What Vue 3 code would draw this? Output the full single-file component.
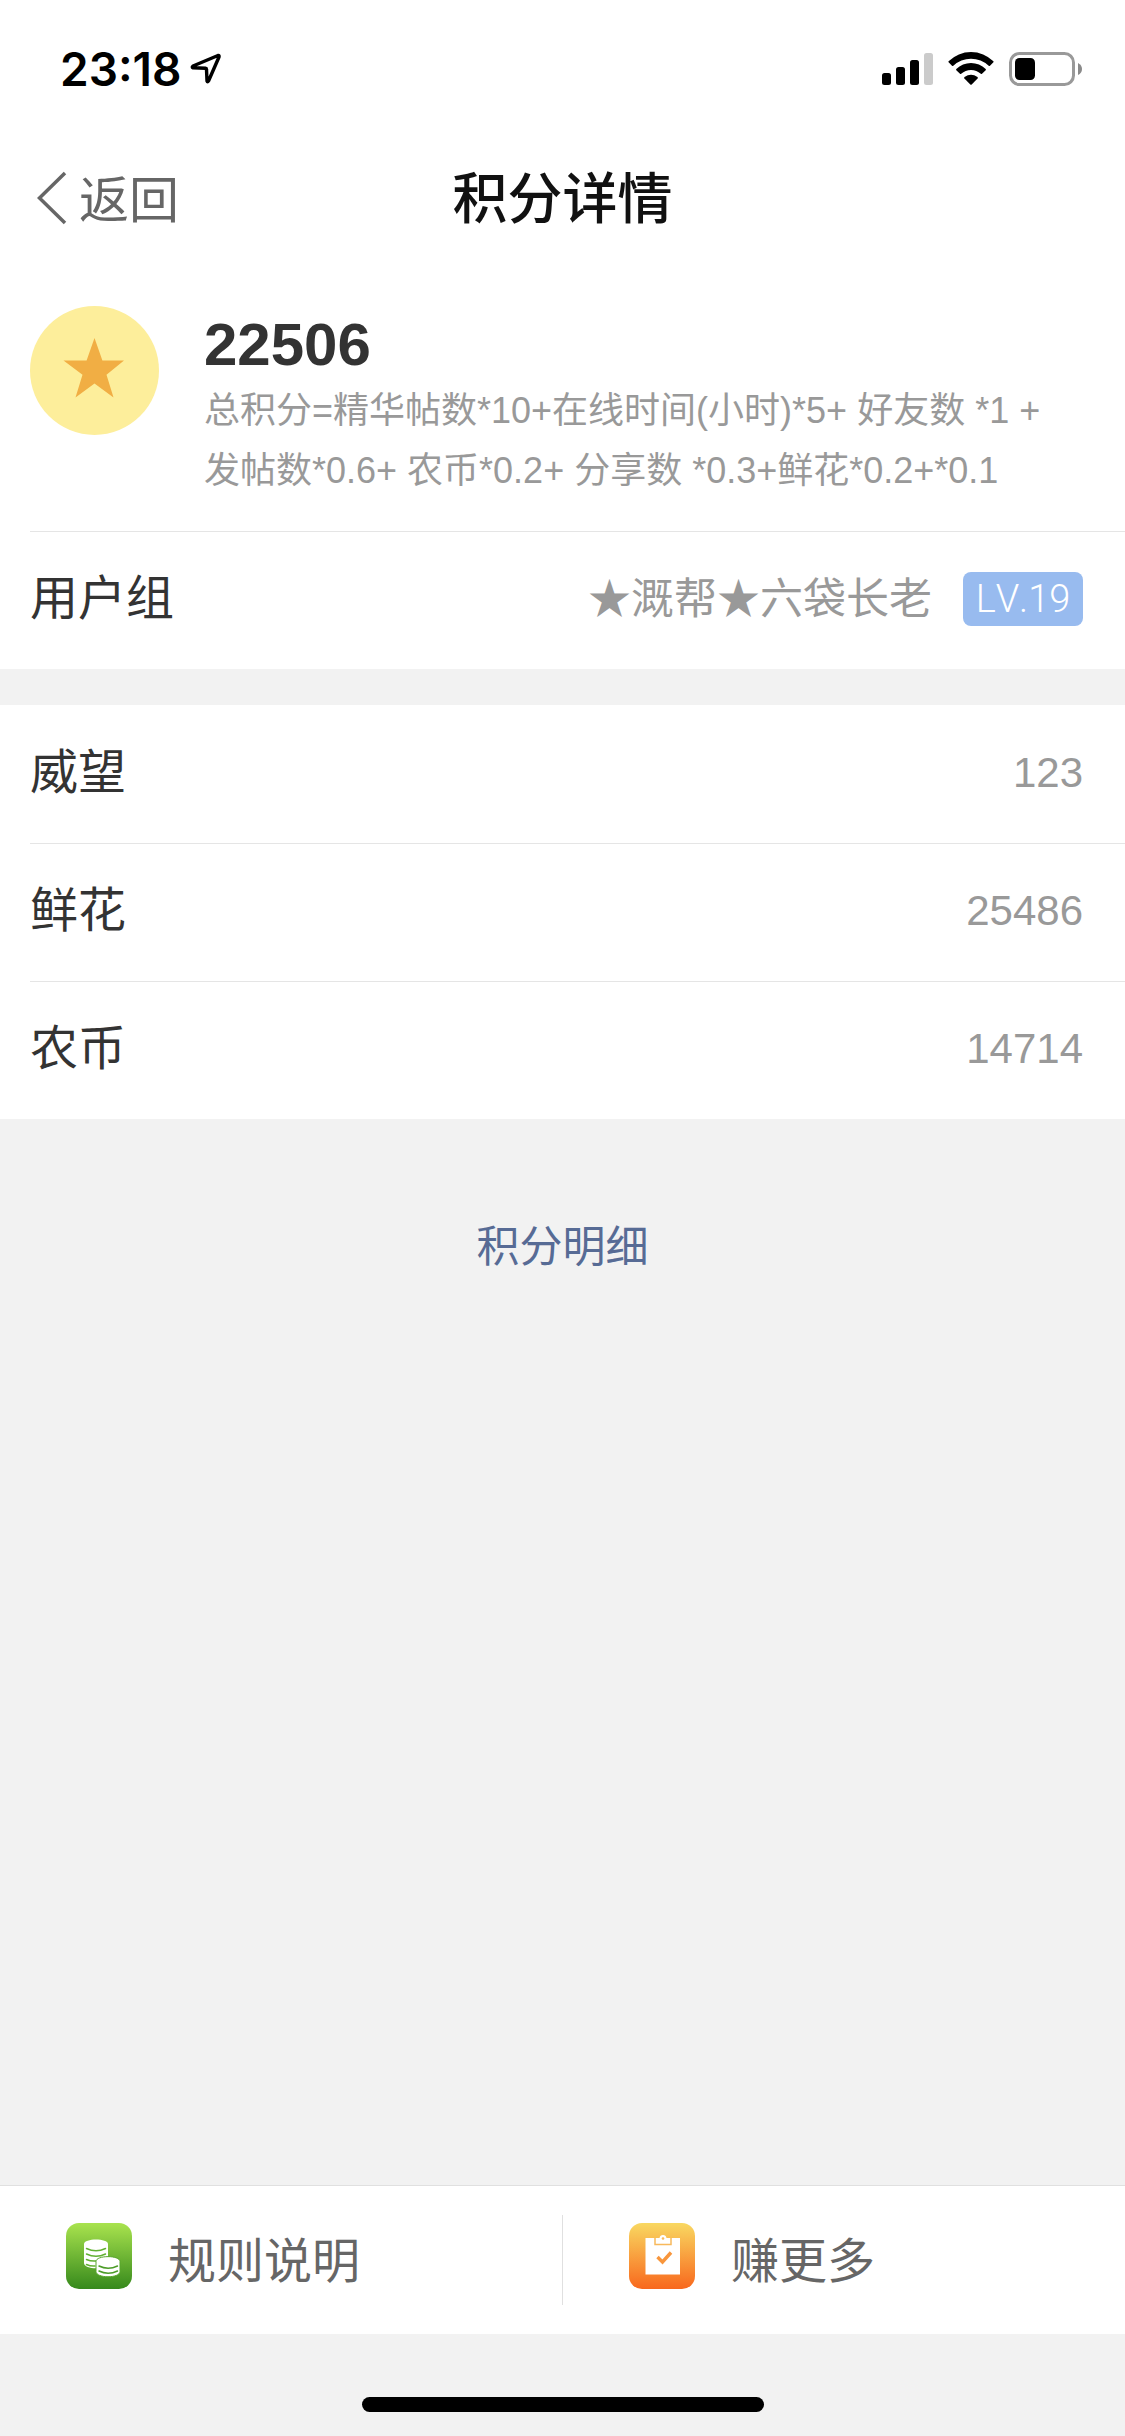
<script setup>
const assets = [
  { name: '威望', value: '123' },
  { name: '鲜花', value: '25486' },
  { name: '农币', value: '14714' },
]
</script>

<template>
  <div class="page">
    <header class="top">
      <div class="status">
        <div class="clock">
          <span class="time">23:18</span>
          <svg class="locate" width="32" height="32" viewBox="0 0 32 32" aria-hidden="true">
            <path d="M28 2.500L3 13Q1.500 14.200 3 14.800L15.500 15.300Q16.500 15.400 16.500 16.400L17 28Q17.500 29.800 18.500 28L29 4Q29.500 2.200 28 2.500Z" fill="none" stroke="#000" stroke-width="3.400" stroke-linejoin="round" />
          </svg>
        </div>
        <div class="indicators">
          <svg width="51" height="34" viewBox="0 0 51 34" aria-hidden="true">
            <rect x="0" y="21" width="9" height="12" rx="2.500" />
            <rect x="14" y="15" width="9" height="18" rx="2.500" />
            <rect x="28" y="8" width="9" height="25" rx="2.500" />
            <rect x="42" y="1" width="9" height="32" rx="2.500" fill="#cbcbcb" />
          </svg>
          <svg class="wifi" width="46" height="34" viewBox="0 0 46 34" aria-hidden="true">
            <path d="M0.600 9.200A32 32 0 0 1 45.400 9.200Q45.800 9.800 45.400 10.300L42 13.800Q41.300 14.300 40.700 13.800A25.500 25.500 0 0 0 5.300 13.800Q4.700 14.300 4 13.800L0.600 10.300Q0.200 9.800 0.600 9.200Z" />
            <path d="M8.300 17A21 21 0 0 1 37.700 17Q38.200 17.600 37.700 18.200L34 21.700Q33.400 22.200 32.800 21.700A14.500 14.500 0 0 0 13.200 21.700Q12.600 22.200 12 21.700L8.300 18.200Q7.800 17.600 8.300 17Z" />
            <path d="M16.500 25Q23 20.500 29.500 25Q30.200 25.700 29.600 26.400L23.700 32.400Q23 33 22.300 32.400L16.400 26.400Q15.800 25.700 16.500 25Z" />
          </svg>
          <svg width="74" height="34" viewBox="0 0 74 34" aria-hidden="true">
            <rect x="1.500" y="1.500" width="63" height="31" rx="9" fill="none" stroke="#999" stroke-width="3" />
            <rect x="6" y="6" width="20" height="22" rx="4.500" />
            <path d="M69 11Q73 13 73 17T69 23Z" fill="#8a8a8a" />
          </svg>
        </div>
      </div>
      <nav class="nav">
        <button class="back" type="button">
          <svg width="32" height="56" viewBox="0 0 32 56" aria-hidden="true">
            <path d="M29 3L3.500 28L29 53" fill="none" stroke="#666" stroke-width="3.500" />
          </svg>
          <span class="back-text">返回</span>
        </button>
        <h1 class="title">积分详情</h1>
      </nav>
    </header>

    <main class="content">
      <section class="card">
        <div class="summary">
          <svg class="medal" width="129" height="129" viewBox="0 0 129 129" aria-hidden="true">
            <circle cx="64.500" cy="64.500" r="64.500" fill="#fdee9b" />
            <path d="M64.500 32L72.400 54.500H94L76.500 68.700L83.500 91.500L64.500 77.500L45.500 91.500L52.500 68.700L33.500 54.500H56.600Z" fill="#f1ae44" />
          </svg>
          <div class="score">
            <strong class="total">22506</strong>
            <p class="formula">总积分=精华帖数*10+在线时间(小时)*5+ 好友数 *1 +<br>发帖数*0.6+ 农币*0.2+ 分享数 *0.3+鲜花*0.2+*0.1</p>
          </div>
        </div>
        <div class="row">
          <span class="name">用户组</span>
          <span class="group">★溉帮★六袋长老</span>
          <span class="level">LV.19</span>
        </div>
      </section>

      <section class="card">
        <div v-for="item in assets" :key="item.name" class="row">
          <span class="name">{{ item.name }}</span>
          <span class="value">{{ item.value }}</span>
        </div>
      </section>

      <a class="detail" href="#">积分明细</a>
    </main>

    <footer class="actions">
      <button class="action" type="button">
        <svg class="badge" width="66" height="66" viewBox="0 0 66 66" aria-hidden="true">
          <defs>
            <linearGradient id="green" x1="0" y1="0" x2="0" y2="1">
              <stop offset="0" stop-color="#a9e34e" />
              <stop offset="1" stop-color="#36891c" />
            </linearGradient>
          </defs>
          <rect width="66" height="66" rx="13" fill="url(#green)" />
          <path d="M18 21C18 15 42 15 42 21V40C42 47 18 47 18 40Z" fill="#fff" />
          <g fill="none" stroke="#62b032" stroke-width="1.500" stroke-linecap="round">
            <path d="M20.500 25.500Q30 30 39.500 25.500" />
            <path d="M20.500 31Q30 35.500 39.500 31" />
            <path d="M20.500 36.500Q25 38.500 30 38" />
            <path d="M20.500 41.500Q25 43.500 29 43" />
          </g>
          <path d="M30 38.500C30 32 54 32 54 38.500V48.500C54 55.500 30 55.500 30 48.500Z" fill="#fff" stroke="#58a62d" stroke-width="1" />
          <g fill="none" stroke="#4c9c28" stroke-width="1.500" stroke-linecap="round">
            <path d="M33 43Q42 47.500 51.500 43" />
            <path d="M33 48Q42 52.500 51.500 48" />
          </g>
        </svg>
        <span>规则说明</span>
      </button>
      <button class="action" type="button">
        <svg class="badge" width="66" height="66" viewBox="0 0 66 66" aria-hidden="true">
          <defs>
            <linearGradient id="orange" x1="0" y1="0" x2="0" y2="1">
              <stop offset="0" stop-color="#f9d861" />
              <stop offset="1" stop-color="#f8681d" />
            </linearGradient>
          </defs>
          <rect width="66" height="66" rx="13" fill="url(#orange)" />
          <rect x="16.500" y="15" width="34.500" height="36.500" fill="#fff" />
          <path d="M26 15V21.500H42V15" fill="none" stroke="#f8b95c" stroke-width="1.500" />
          <path d="M27 15H30.500Q31 12 34 12T37.500 15H41V20H27Z" fill="#fff" />
          <circle cx="34" cy="15.500" r="1.300" fill="#f8b95c" />
          <path d="M28.500 34L33.500 39L42 29.500" fill="none" stroke="#f8963c" stroke-width="3.400" />
        </svg>
        <span>赚更多</span>
      </button>
    </footer>
    <div class="home"><div class="indicator"></div></div>
  </div>
</template>

<style>
html,
body {
  margin: 0;
  background: #f2f2f2;
}
</style>

<style scoped>
.page {
  display: flex;
  flex-direction: column;
  min-height: 100vh;
  color: #333;
  font-family: "Liberation Sans", "Noto Sans CJK SC", sans-serif;
}
button {
  margin: 0;
  padding: 0;
  border: 0;
  background: none;
  color: #666;
  font-family: inherit;
  cursor: pointer;
}
svg {
  display: block;
  flex: none;
}
.top {
  background: #fff;
}
.status {
  display: flex;
  justify-content: space-between;
  align-items: center;
  height: 132px;
  padding: 0 42px 0 60px;
  color: #000;
}
.clock {
  display: flex;
  align-items: center;
  gap: 8px;
  margin-top: 6px;
}
.time {
  font: 600 46px/54px Inter, sans-serif;
}
.indicators {
  display: flex;
  align-items: center;
  gap: 15px;
  margin-top: 6px;
}
.nav {
  display: grid;
  grid-template-columns: 1fr auto 1fr;
  align-items: center;
  height: 132px;
  padding: 0 36px;
}
.back {
  display: flex;
  align-items: center;
  gap: 11px;
  font-size: 50px;
  line-height: 72px;
}
.back-text {
  padding-top: 6px;
}
.title {
  margin: 0;
  padding-top: 2px;
  color: #111;
  font-size: 55px;
  font-weight: 500;
  line-height: 72px;
}
.content {
  flex: 1;
  display: flex;
  flex-direction: column;
  gap: 36px;
}
.card {
  padding-left: 30px;
  background: #fff;
}
.summary {
  display: flex;
  gap: 45px;
  padding: 42px 42px 30px 0;
}
.score {
  padding-top: 3px;
}
.total {
  display: block;
  font-size: 60px;
  line-height: 72px;
}
.formula {
  margin: 0;
  color: #999;
  font-size: 36px;
  line-height: 60px;
}
.row {
  box-sizing: border-box;
  display: flex;
  align-items: center;
  height: 138px;
  padding: 0 42px 3px 0;
  line-height: 60px;
}
.summary + .row,
.row + .row {
  border-top: 1px solid #e5e5e5;
}
.name {
  flex: 1;
  font-size: 48px;
}
.group {
  margin-right: 31px;
  color: #999;
  font-size: 43px;
}
.level {
  width: 120px;
  border-radius: 8px;
  background: #98bbef;
  color: #fff;
  font: 300 38px/54px Roboto, sans-serif;
  font-kerning: none;
  text-align: center;
}
.value {
  color: #999;
  font-size: 42px;
}
.detail {
  align-self: center;
  margin-top: 56px;
  color: #576b95;
  font-size: 43px;
  line-height: 72px;
  text-decoration: none;
}
.actions {
  display: flex;
  align-items: center;
  height: 148px;
  border-top: 1px solid #e0e0e0;
  background: #fff;
}
.action {
  flex: 1;
  display: flex;
  align-items: center;
  gap: 36px;
  box-sizing: border-box;
  height: 90px;
  padding: 4px 0 0 66px;
  font-size: 48px;
  line-height: 60px;
}
.action + .action {
  border-left: 1px solid #e0e0e0;
}
.badge {
  margin-bottom: 12px;
}
.home {
  padding: 63px 0 24px;
}
.indicator {
  width: 402px;
  height: 15px;
  margin: 0 auto;
  border-radius: 8px;
  background: #000;
}
</style>
